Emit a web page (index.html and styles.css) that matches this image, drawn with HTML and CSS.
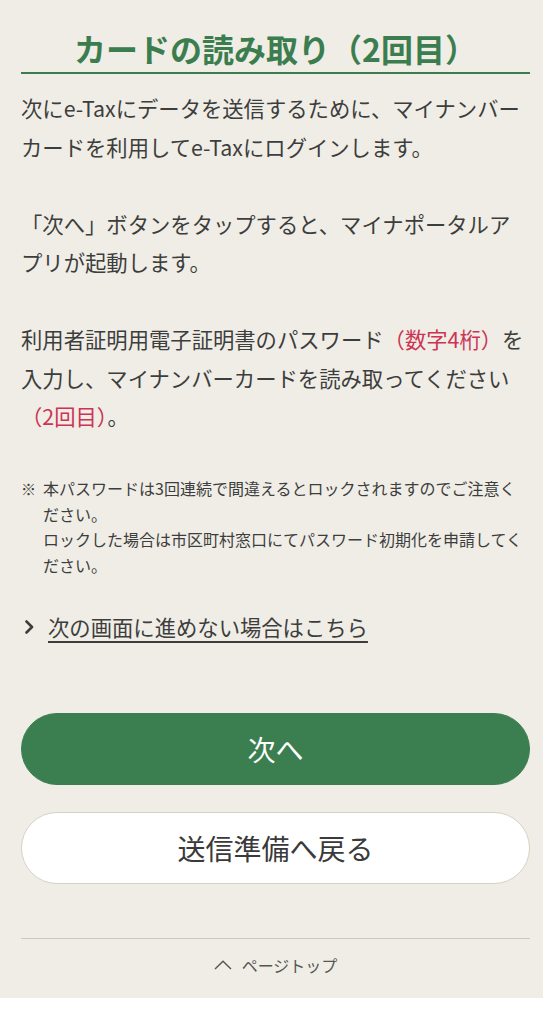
FILE: index.html
```html
<!DOCTYPE html>
<html lang="ja">
<head>
<meta charset="utf-8">
<title>カードの読み取り（2回目）</title>
<link rel="stylesheet" href="styles.css">
</head>
<body>
<div class="page">
  <main class="content">
    <h1 class="title">カードの読み取り（2回目）</h1>
    <p class="text">次にe-Taxにデータを送信するために、マイナンバーカードを利用してe-Taxにログインします。</p>
    <p class="text">「次へ」ボタンをタップすると、マイナポータルアプリが起動します。</p>
    <p class="text">利用者証明用電子証明書のパスワード<span class="red">（数字4桁）</span>を入力し、マイナンバーカードを読み取ってください<span class="red">（2回目）</span>。</p>
    <div class="note">
      <span class="note-mark">※</span>
      <div class="note-body">
        <p>本パスワードは3回連続で間違えるとロックされますのでご注意ください。</p>
        <p>ロックした場合は市区町村窓口にてパスワード初期化を申請してください。</p>
      </div>
    </div>
    <a class="help-link" href="#">
      <svg class="chev" width="12" height="14" viewBox="0 0 12 14"><path d="M2.5 1.5 L8 7 L2.5 12.5" fill="none" stroke="#3d3d3d" stroke-width="2.6" stroke-linecap="round" stroke-linejoin="round"/></svg>
      <span class="help-text">次の画面に進めない場合はこちら</span>
    </a>
    <div class="buttons">
      <button class="btn btn-primary">次へ</button>
      <button class="btn btn-secondary">送信準備へ戻る</button>
    </div>
  </main>
  <footer class="footer">
    <a class="pagetop" href="#">
      <svg width="18" height="10" viewBox="0 0 18 10"><path d="M1 9 L9 1.2 L17 9" fill="none" stroke="#555" stroke-width="1.4"/></svg>
      <span>ページトップ</span>
    </a>
  </footer>
</div>
</body>
</html>
```

FILE: styles.css
```css
html {
  background: #ffffff;
}
body {
  margin: 0;
  font-family: "Noto Sans CJK JP", "Noto Sans", sans-serif;
  color: #3d3d3d;
}
.page {
  background: #efede5;
  padding: 0 13px 0 21px;
  height: 998px;
  box-sizing: border-box;
}
.content {
  padding-top: 24px;
}
.title {
  margin: 0;
  font-size: 32px;
  line-height: 48px;
  font-weight: 700;
  color: #3b7d4f;
  text-align: center;
  border-bottom: 2px solid #3b7d4f;
}
.text {
  margin: 15px 0 38.4px;
  font-size: 21.33px;
  line-height: 38.6px;
}
.text + .text {
  margin-top: 0;
}
.red {
  color: #cc3355;
  white-space: nowrap;
}
.note {
  display: flex;
  margin-top: 40px;
  font-size: 16px;
  line-height: 25.6px;
}
.note-mark {
  flex: 0 0 22px;
  font-size: 15px;
}
.note-body {
  flex: 1;
}
.note-body p {
  margin: 0;
}
.help-link {
  display: flex;
  align-items: center;
  gap: 12px;
  margin-top: 33px;
  padding-left: 3px;
  color: #3d3d3d;
  text-decoration: none;
  font-size: 21.33px;
  line-height: 32px;
}
.help-text {
  text-decoration: underline;
  text-decoration-thickness: 1.5px;
  text-underline-offset: 5px;
}
.buttons {
  display: flex;
  flex-direction: column;
  gap: 27px;
  margin-top: 70px;
}
.btn {
  height: 72px;
  border-radius: 36px;
  font-family: "Noto Sans CJK JP", "Noto Sans", sans-serif;
  font-size: 28px;
  cursor: pointer;
  box-sizing: border-box;
}
.btn-primary {
  background: #3b7e50;
  color: #ffffff;
  border: 1px solid #3b7e50;
}
.btn-secondary {
  background: #ffffff;
  color: #3a3a3a;
  border: 1px solid #d6d2c6;
}
.footer {
  margin-top: 54px;
  border-top: 1px solid #cccac2;
  height: 59px;
  box-sizing: border-box;
  padding-bottom: 6px;
  display: flex;
  align-items: center;
  justify-content: center;
}
.pagetop {
  display: flex;
  align-items: center;
  gap: 10px;
  font-size: 16px;
  color: #555555;
  text-decoration: none;
}
```
